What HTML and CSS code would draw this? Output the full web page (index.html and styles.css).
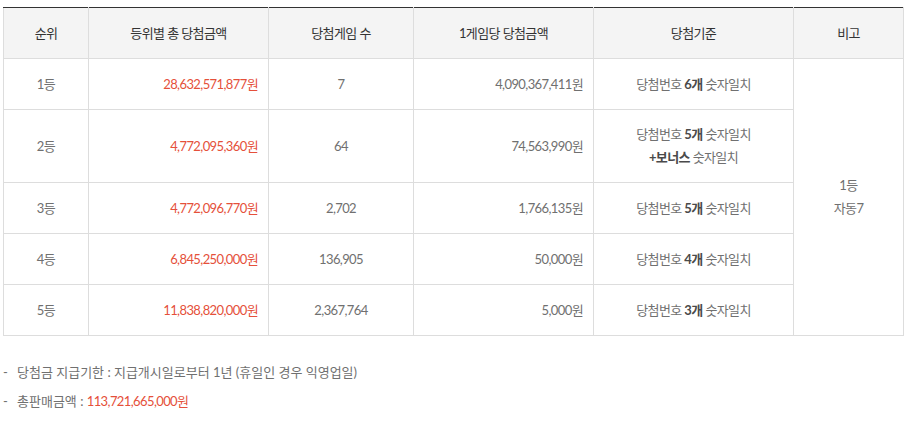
FILE: index.html
```html
<!DOCTYPE html>
<html lang="ko">
<head>
<meta charset="utf-8">
<link rel="stylesheet" href="styles.css">
</head>
<body>
<div class="wrap">
  <table class="result">
    <colgroup>
      <col class="c1"><col class="c2"><col class="c3"><col class="c4"><col class="c5"><col class="c6">
    </colgroup>
    <thead>
      <tr>
        <th>순위</th>
        <th>등위별 총 당첨금액</th>
        <th>당첨게임 수</th>
        <th>1게임당 당첨금액</th>
        <th>당첨기준</th>
        <th>비고</th>
      </tr>
    </thead>
    <tbody>
      <tr>
        <td>1등</td>
        <td class="num red">28,632,571,877원</td>
        <td>7</td>
        <td class="num">4,090,367,411원</td>
        <td>당첨번호 <strong>6개</strong> 숫자일치</td>
        <td rowspan="5">1등<br>자동7</td>
      </tr>
      <tr class="tall">
        <td>2등</td>
        <td class="num red">4,772,095,360원</td>
        <td>64</td>
        <td class="num">74,563,990원</td>
        <td>당첨번호 <strong>5개</strong> 숫자일치<br><strong>+보너스</strong> 숫자일치</td>
      </tr>
      <tr>
        <td>3등</td>
        <td class="num red">4,772,096,770원</td>
        <td>2,702</td>
        <td class="num">1,766,135원</td>
        <td>당첨번호 <strong>5개</strong> 숫자일치</td>
      </tr>
      <tr>
        <td>4등</td>
        <td class="num red">6,845,250,000원</td>
        <td>136,905</td>
        <td class="num">50,000원</td>
        <td>당첨번호 <strong>4개</strong> 숫자일치</td>
      </tr>
      <tr>
        <td>5등</td>
        <td class="num red">11,838,820,000원</td>
        <td>2,367,764</td>
        <td class="num">5,000원</td>
        <td>당첨번호 <strong>3개</strong> 숫자일치</td>
      </tr>
    </tbody>
  </table>
  <ul class="notes">
    <li>당첨금 지급기한 : 지급개시일로부터 1년 (휴일인 경우 익영업일)</li>
    <li>총판매금액 : <span class="red amount">113,721,665,000원</span></li>
  </ul>
</div>
</body>
</html>
```

FILE: styles.css
```css
html, body {
  margin: 0;
  padding: 0;
  background: #fff;
}
body {
  font-family: Lato, "Noto Sans CJK KR", sans-serif;
  font-size: 13px;
  letter-spacing: -0.6px;
  color: #707070;
}
.wrap {
  padding: 7px 6px 0 3px;
}
.result {
  width: 900px;
  border-collapse: collapse;
  table-layout: fixed;
  border-top: 1px solid #333;
}
.c1 { width: 85px; }
.c2 { width: 180px; }
.c3 { width: 145px; }
.c4 { width: 180px; }
.c5 { width: 200px; }
.c6 { width: 110px; }
.result th,
.result td {
  border: 1px solid #ddd;
  text-align: center;
  vertical-align: middle;
  padding: 0 10px;
  line-height: 23px;
}
.result thead th {
  border-top: 1px solid #333;
  background: #f4f4f4;
  color: #333;
  font-weight: normal;
  height: 50px;
}
.result tbody td {
  height: 50px;
}
.result tbody tr.tall td {
  height: 72px;
}
.result td.num {
  text-align: right;
}
.red {
  color: #e5503a;
}
.result strong {
  color: #4a4a4a;
  font-weight: bold;
}
.notes {
  list-style: none;
  margin: 22px 0 0;
  padding: 0;
  letter-spacing: 0;
}
.notes li {
  position: relative;
  padding-left: 14px;
  line-height: 29px;
}
.notes li::before {
  content: "-";
  position: absolute;
  left: 0;
  top: 0;
}
.notes .amount {
  letter-spacing: -0.6px;
}
```
